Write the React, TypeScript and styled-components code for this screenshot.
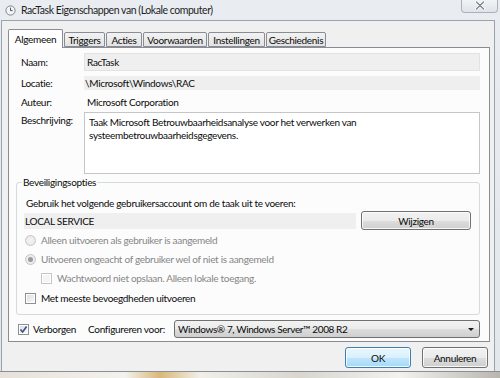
import styled, { createGlobalStyle } from "styled-components"

const GlobalStyle = createGlobalStyle`
  html, body {
    margin: 0;
    padding: 0;
    background: #c9c4b8;
  }
  body {
    font-family: Lato, "Liberation Sans", sans-serif;
    font-size: 10px;
    letter-spacing: -0.3px;
    color: #0a0a0a;
  }
`

const Screen = styled.div`
  width: 500px;
  height: 378px;
  overflow: hidden;
  background: linear-gradient(90deg, #e6e2da 0%, #f4f2ee 25%, #d8b878 32%, #f1efe9 40%, #d9d6d0 60%, #f3f2ef 80%, #b9b6b0 100%);
`

const Frame = styled.div`
  height: 372px;
  display: flex;
  flex-direction: column;
  background: linear-gradient(180deg, #e9edf1 0%, #e2e7ec 100%);
  border-bottom: 1px solid #8a8f96;
  padding: 0 5px 0 1px;
  box-sizing: border-box;
`

const TitleBar = styled.div`
  height: 20px;
  display: flex;
  align-items: center;
  gap: 5px;
  padding-left: 4px;
  position: relative;
  flex-shrink: 0;
`

const Title = styled.span`
  font-size: 10.5px;
  letter-spacing: -0.45px;
  color: #1e1e1e;
`

const CloseButton = styled.div`
  position: absolute;
  right: -3px;
  top: -1px;
  width: 35px;
  height: 13px;
  border: 1px solid #aab2bc;
  border-top: none;
  border-radius: 0 0 4px 4px;
  background: linear-gradient(180deg, #f2f4f6 0%, #dfe4e9 100%);
  display: flex;
  align-items: center;
  justify-content: center;
`

const Client = styled.div`
  flex: 1;
  background: #f0f0f0;
  border: 1px solid #9aa3ad;
  border-bottom: none;
  padding: 7px 4px 0 6px;
  display: flex;
  flex-direction: column;
`

const TabRow = styled.div`
  display: flex;
  align-items: flex-end;
  height: 19px;
  position: relative;
  z-index: 1;
`

const Tab = styled.div<{ $active?: boolean; $width: number }>`
  width: ${(p) => p.$width}px;
  height: ${(p) => (p.$active ? "19px" : "15px")};
  margin-right: 1px;
  margin-bottom: ${(p) => (p.$active ? "-1px" : "0")};
  display: flex;
  align-items: center;
  justify-content: center;
  box-sizing: border-box;
  border: 1px solid #898c95;
  border-bottom: ${(p) => (p.$active ? "none" : "1px solid #898c95")};
  border-radius: 2px 2px 0 0;
  background: ${(p) =>
    p.$active ? "#ffffff" : "linear-gradient(180deg, #f2f2f2 0%, #e3e3e3 100%)"};
  padding-top: ${(p) => (p.$active ? "0" : "1px")};
`

const Panel = styled.div`
  background: #fcfcfc;
  border: 1px solid #898c95;
  height: 295px;
  box-sizing: border-box;
  padding: 5px 9px 0 7px;
  display: flex;
  flex-direction: column;
`

const FieldRow = styled.div<{ $height: number; $top?: number }>`
  display: flex;
  align-items: center;
  height: ${(p) => p.$height}px;
  margin-top: ${(p) => p.$top ?? 0}px;
  padding-left: 5px;
`

const Label = styled.span`
  width: 63px;
  flex-shrink: 0;
  align-self: center;
`

const TopLabel = styled(Label)`
  align-self: flex-start;
  margin-top: 2px;
`

const ReadField = styled.div<{ $bordered?: boolean }>`
  flex: 1;
  align-self: stretch;
  display: flex;
  align-items: center;
  padding-left: ${(p) => (p.$bordered ? "2px" : "0")};
  background: #efefef;
  border: 1px solid ${(p) => (p.$bordered ? "#e2e2e2" : "#efefef")};
`

const PlainValue = styled.span`
  padding-left: 3px;
`

const TextArea = styled.div`
  flex: 1;
  align-self: stretch;
  background: #ffffff;
  border: 1px solid #c4c6ca;
  padding: 3px 4px;
  line-height: 13px;
`

const Group = styled.fieldset`
  margin: 2px 0 0 0;
  padding: 0 8px 0 7px;
  border: 1px solid #d5dadf;
  border-radius: 3px;
  height: 139px;
  box-sizing: border-box;
  display: flex;
  flex-direction: column;
`

const Legend = styled.legend`
  padding: 0 1px;
  margin-left: -2px;
  line-height: 12px;
`

const GroupText = styled.div`
  margin-top: 9px;
  padding-left: 2px;
  line-height: 13px;
`

const AccountRow = styled.div`
  display: flex;
  align-items: center;
  gap: 5px;
  margin-top: 1px;
`

const AccountField = styled.div`
  flex: 1;
  height: 16px;
  background: #efefef;
  display: flex;
  align-items: center;
  padding-left: 1px;
`

const Button = styled.button<{ $default?: boolean; $width: number; $height: number }>`
  width: ${(p) => p.$width}px;
  height: ${(p) => p.$height}px;
  font-family: inherit;
  font-size: 10px;
  letter-spacing: -0.3px;
  color: #0a0a0a;
  border: 1px solid ${(p) => (p.$default ? "#3c7fb1" : "#707070")};
  border-radius: 3px;
  padding: 0;
  background: ${(p) =>
    p.$default
      ? "linear-gradient(180deg, #eaf6fd 0%, #d9f0fc 50%, #bee6fd 51%, #a7d9f5 100%)"
      : "linear-gradient(180deg, #f2f2f2 0%, #ebebeb 50%, #dddddd 51%, #cfcfcf 100%)"};
  box-shadow: inset 0 0 0 1px rgba(255, 255, 255, 0.8);
`

const OptionRow = styled.div<{ $indent?: number; $top: number; $disabled?: boolean }>`
  display: flex;
  align-items: center;
  gap: 5px;
  height: 12px;
  margin-top: ${(p) => p.$top}px;
  padding-left: ${(p) => p.$indent ?? 1}px;
  color: ${(p) => (p.$disabled ? "#868686" : "#0a0a0a")};
`

const Radio = styled.span<{ $checked?: boolean }>`
  width: 11px;
  height: 11px;
  box-sizing: border-box;
  border-radius: 50%;
  border: 1px solid #c6c6c6;
  background: radial-gradient(circle, #f4f4f4 0%, #e6e6e6 100%);
  display: flex;
  align-items: center;
  justify-content: center;

  &::after {
    content: "";
    display: ${(p) => (p.$checked ? "block" : "none")};
    width: 5px;
    height: 5px;
    border-radius: 50%;
    background: #9a9a9a;
  }
`

const Check = styled.span<{ $disabled?: boolean }>`
  width: 11px;
  height: 11px;
  flex-shrink: 0;
  box-sizing: border-box;
  border: 1px solid ${(p) => (p.$disabled ? "#c6c6c6" : "#8e8f8f")};
  background: ${(p) =>
    p.$disabled ? "#f4f4f4" : "linear-gradient(135deg, #dcdcdc 0%, #fafafa 100%)"};
  box-shadow: inset 0 0 0 1px #ffffff;
  display: flex;
  align-items: center;
  justify-content: center;
`

const BottomRow = styled.div`
  display: flex;
  align-items: center;
  margin-top: 5px;
  padding-left: 2px;
  height: 18px;
`

const CheckLabel = styled.span`
  margin-left: 4px;
  width: 55px;
  flex-shrink: 0;
`

const SelectLabel = styled.span`
  width: 86px;
  flex-shrink: 0;
`

const Select = styled.div`
  flex: 1;
  height: 18px;
  box-sizing: border-box;
  border: 1px solid #707070;
  border-radius: 3px;
  background: linear-gradient(180deg, #f2f2f2 0%, #ebebeb 50%, #dddddd 51%, #cfcfcf 100%);
  display: flex;
  align-items: center;
  padding: 0 5px 0 3px;
  justify-content: space-between;
  letter-spacing: -0.4px;
`

const Arrow = styled.span`
  width: 0;
  height: 0;
  border-left: 3px solid transparent;
  border-right: 3px solid transparent;
  border-top: 3px solid #1a1a1a;
`

const Footer = styled.div`
  display: flex;
  justify-content: flex-end;
  gap: 11px;
  padding: 5px 2px 0 0;
`

function ClockIcon() {
  return (
    <svg width="11" height="11" viewBox="0 0 11 11">
      <circle cx="5.5" cy="5.5" r="4.6" fill="#f4f4f4" stroke="#7d8590" strokeWidth="1" />
      <path d="M5.5 2.6 V5.6 H7.6" fill="none" stroke="#3d4652" strokeWidth="0.9" />
    </svg>
  )
}

function CloseGlyph() {
  return (
    <svg width="10" height="9" viewBox="0 0 10 9">
      <path d="M1.5 1 L8.5 8 M8.5 1 L1.5 8" stroke="#ffffff" strokeWidth="3" strokeLinecap="round" />
      <path d="M1.5 1 L8.5 8 M8.5 1 L1.5 8" stroke="#7d8590" strokeWidth="1.4" strokeLinecap="round" />
    </svg>
  )
}

function CheckMark() {
  return (
    <svg width="9" height="9" viewBox="0 0 9 9">
      <path d="M1.5 4.5 L3.6 7 L7.6 1.5" fill="none" stroke="#3a4f8f" strokeWidth="1.6" />
    </svg>
  )
}

const TABS = [
  { name: "Algemeen", width: 55 },
  { name: "Triggers", width: 41 },
  { name: "Acties", width: 36 },
  { name: "Voorwaarden", width: 64 },
  { name: "Instellingen", width: 57 },
  { name: "Geschiedenis", width: 60 },
]

export default function App() {
  return (
    <>
      <GlobalStyle />
      <Screen>
        <Frame>
          <TitleBar>
            <ClockIcon />
            <Title>RacTask Eigenschappen van (Lokale computer)</Title>
            <CloseButton>
              <CloseGlyph />
            </CloseButton>
          </TitleBar>
          <Client>
            <TabRow>
              {TABS.map((t, i) => (
                <Tab key={t.name} $active={i === 0} $width={t.width}>
                  {t.name}
                </Tab>
              ))}
            </TabRow>
            <Panel>
              <FieldRow $height={18}>
                <Label>Naam:</Label>
                <ReadField $bordered>RacTask</ReadField>
              </FieldRow>
              <FieldRow $height={14} $top={5}>
                <Label>Locatie:</Label>
                <ReadField>\Microsoft\Windows\RAC</ReadField>
              </FieldRow>
              <FieldRow $height={14} $top={5}>
                <Label>Auteur:</Label>
                <PlainValue>Microsoft Corporation</PlainValue>
              </FieldRow>
              <FieldRow $height={62} $top={3}>
                <TopLabel>Beschrijving:</TopLabel>
                <TextArea>
                  Taak Microsoft Betrouwbaarheidsanalyse voor het verwerken van
                  <br />
                  systeembetrouwbaarheidsgegevens.
                </TextArea>
              </FieldRow>

              <Group>
                <Legend>Beveiligingsopties</Legend>
                <GroupText>
                  Gebruik het volgende gebruikersaccount om de taak uit te voeren:
                </GroupText>
                <AccountRow>
                  <AccountField>LOCAL SERVICE</AccountField>
                  <Button $width={110} $height={19}>
                    Wijzigen
                  </Button>
                </AccountRow>
                <OptionRow $top={4} $disabled>
                  <Radio />
                  Alleen uitvoeren als gebruiker is aangemeld
                </OptionRow>
                <OptionRow $top={7} $disabled>
                  <Radio $checked />
                  Uitvoeren ongeacht of gebruiker wel of niet is aangemeld
                </OptionRow>
                <OptionRow $top={7} $indent={17} $disabled>
                  <Check $disabled />
                  Wachtwoord niet opslaan. Alleen lokale toegang.
                </OptionRow>
                <OptionRow $top={8}>
                  <Check />
                  Met meeste bevoegdheden uitvoeren
                </OptionRow>
              </Group>

              <BottomRow>
                <Check>
                  <CheckMark />
                </Check>
                <CheckLabel>Verborgen</CheckLabel>
                <SelectLabel>Configureren voor:</SelectLabel>
                <Select>
                  <span>Windows® 7, Windows Server™ 2008 R2</span>
                  <Arrow />
                </Select>
              </BottomRow>
            </Panel>
            <Footer>
              <Button $default $width={66} $height={21}>
                OK
              </Button>
              <Button $width={66} $height={21}>
                Annuleren
              </Button>
            </Footer>
          </Client>
        </Frame>
      </Screen>
    </>
  )
}
